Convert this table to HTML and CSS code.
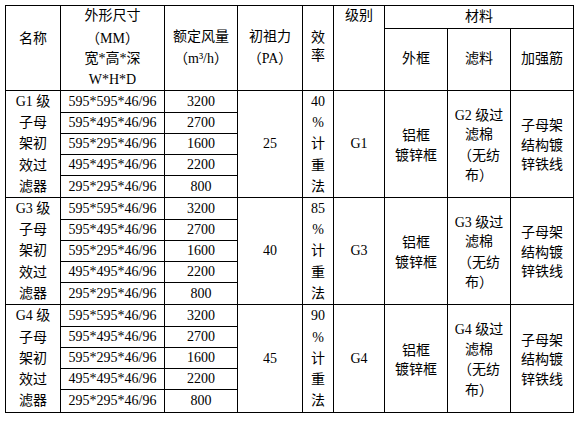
FILE: index.html
```html
<!DOCTYPE html>
<html lang="zh-CN">
<head>
<meta charset="utf-8">
<title>子母架初效过滤器规格表</title>
<link rel="stylesheet" href="styles.css">
</head>
<body>
<div class="sheet">
  <div class="cell r2 hd name-hd">名称</div>
  <div class="cell r2 hd"><p class="t">外形尺寸<br><span class="fw">（</span>MM<span class="fw">）</span><br>宽*高*深<br>W*H*D</p></div>
  <div class="cell r2 hd"><p class="t">额定风量<br><span class="fw">（</span>m³/h<span class="fw">）</span></p></div>
  <div class="cell r2 hd"><p class="t">初祖力<br><span class="fw">（</span>PA<span class="fw">）</span></p></div>
  <div class="cell r2 hd eff-hd">效<br>率</div>
  <div class="cell r2 hd top">级别</div>
  <div class="cell c3 hd">材料</div>
  <div class="cell hd">外框</div>
  <div class="cell hd">滤料</div>
  <div class="cell hd">加强筋</div>

  <div class="cell r5 tall">G1 级<br>子母<br>架初<br>效过<br>滤器</div>
  <div class="cell">595*595*46/96</div>
  <div class="cell">3200</div>
  <div class="cell r5">25</div>
  <div class="cell r5 tall">40<br>%<br>计<br>重<br>法</div>
  <div class="cell r5">G1</div>
  <div class="cell r5 mat">铝框<br>镀锌框</div>
  <div class="cell r5 mat"><p class="t">G2 级过<br>滤棉<br><span class="fw">（</span>无纺<br>布<span class="fw">）</span></p></div>
  <div class="cell r5 mat">子母架<br>结构镀<br>锌铁线</div>
  <div class="cell">595*495*46/96</div>
  <div class="cell">2700</div>
  <div class="cell">595*295*46/96</div>
  <div class="cell">1600</div>
  <div class="cell">495*495*46/96</div>
  <div class="cell">2200</div>
  <div class="cell">295*295*46/96</div>
  <div class="cell">800</div>

  <div class="cell r5 tall">G3 级<br>子母<br>架初<br>效过<br>滤器</div>
  <div class="cell">595*595*46/96</div>
  <div class="cell">3200</div>
  <div class="cell r5">40</div>
  <div class="cell r5 tall">85<br>%<br>计<br>重<br>法</div>
  <div class="cell r5">G3</div>
  <div class="cell r5 mat">铝框<br>镀锌框</div>
  <div class="cell r5 mat"><p class="t">G3 级过<br>滤棉<br><span class="fw">（</span>无纺<br>布<span class="fw">）</span></p></div>
  <div class="cell r5 mat">子母架<br>结构镀<br>锌铁线</div>
  <div class="cell">595*495*46/96</div>
  <div class="cell">2700</div>
  <div class="cell">595*295*46/96</div>
  <div class="cell">1600</div>
  <div class="cell">495*495*46/96</div>
  <div class="cell">2200</div>
  <div class="cell">295*295*46/96</div>
  <div class="cell">800</div>

  <div class="cell r5 tall">G4 级<br>子母<br>架初<br>效过<br>滤器</div>
  <div class="cell">595*595*46/96</div>
  <div class="cell">3200</div>
  <div class="cell r5">45</div>
  <div class="cell r5 tall">90<br>%<br>计<br>重<br>法</div>
  <div class="cell r5">G4</div>
  <div class="cell r5 mat">铝框<br>镀锌框</div>
  <div class="cell r5 mat"><p class="t">G4 级过<br>滤棉<br><span class="fw">（</span>无纺<br>布<span class="fw">）</span></p></div>
  <div class="cell r5 mat">子母架<br>结构镀<br>锌铁线</div>
  <div class="cell">595*495*46/96</div>
  <div class="cell">2700</div>
  <div class="cell">595*295*46/96</div>
  <div class="cell">1600</div>
  <div class="cell">495*495*46/96</div>
  <div class="cell">2200</div>
  <div class="cell">295*295*46/96</div>
  <div class="cell">800</div>
</div>
</body>
</html>
```

FILE: styles.css
```css
html, body {
  margin: 0;
  background: #fff;
}

body {
  padding: 5px;
  font-family: "Liberation Serif", "Noto Sans CJK SC", serif;
  font-size: 14px;
  color: #000;
}

.sheet {
  display: grid;
  width: 569px;
  box-sizing: border-box;
  padding: 1px;
  gap: 1px;
  background: #000;
  grid-template-columns: 54px 103px 72px 64px 30px 50px 62px 62px 62px;
  grid-template-rows:
    22px 61px
    21px 20px 20px 20px 21px
    21px 20px 20px 20px 21px
    21px 20px 20px 20px 22px;
}

.cell {
  background: #fff;
  display: flex;
  flex-direction: column;
  justify-content: center;
  align-items: center;
  text-align: center;
  line-height: 20px;
  white-space: nowrap;
  overflow: visible;
}

.t {
  margin: 0;
  display: block;
}

.fw {
  display: inline-block;
  width: 14px;
  font-family: "Noto Sans CJK SC", sans-serif;
  font-feature-settings: "chws" 0, "halt" 0;
}

.r2 { grid-row: span 2; }
.r5 { grid-row: span 5; }
.c3 { grid-column: span 3; }

.hd { line-height: 20.5px; }
.name-hd { padding-bottom: 18px; }
.eff-hd { line-height: 18px; padding-bottom: 2px; }
.top { justify-content: flex-start; }

.tall { line-height: 21.3px; }
.mat { line-height: 19.5px; padding-top: 3px; }
```
